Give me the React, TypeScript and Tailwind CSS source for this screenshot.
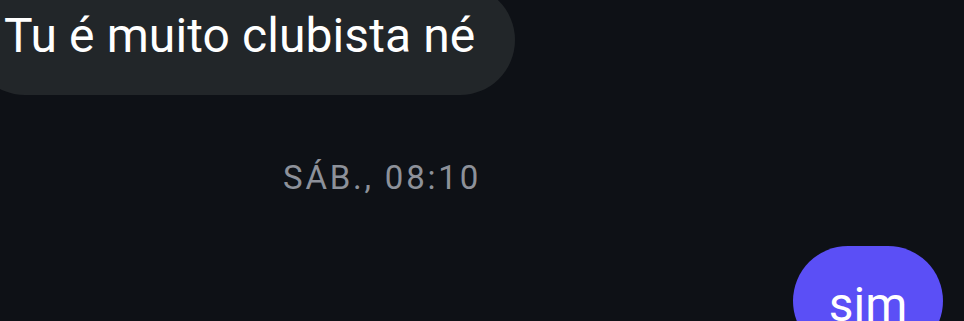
export default function App() {
  return (
    <div
      className="w-[964px] h-[321px] overflow-hidden bg-[#0e1116] flex flex-col"
      style={{ fontFamily: "Roboto, 'Liberation Sans', sans-serif" }}
    >
      <div className="shrink-0 self-start -mt-[15px] -ml-[30px] h-[110px] rounded-[55px] bg-[#222629] flex items-start pt-[27px] pl-[34px] pr-[40px]">
        <span className="text-[48px] leading-none text-white tracking-[0.1px]">Tu é muito clubista né</span>
      </div>
      <div className="shrink-0 mt-[66px] ml-[283px] text-[33px] leading-none text-[#8d919a] tracking-[2.8px]">SÁB., 08:10</div>
      <div className="shrink-0 self-end mr-[21px] mt-[52px] w-[150px] h-[110px] rounded-[55px] bg-[#5b4ff6] flex justify-center pt-[35px]">
        <span className="text-[48px] leading-none text-white">sim</span>
      </div>
    </div>
  );
}
